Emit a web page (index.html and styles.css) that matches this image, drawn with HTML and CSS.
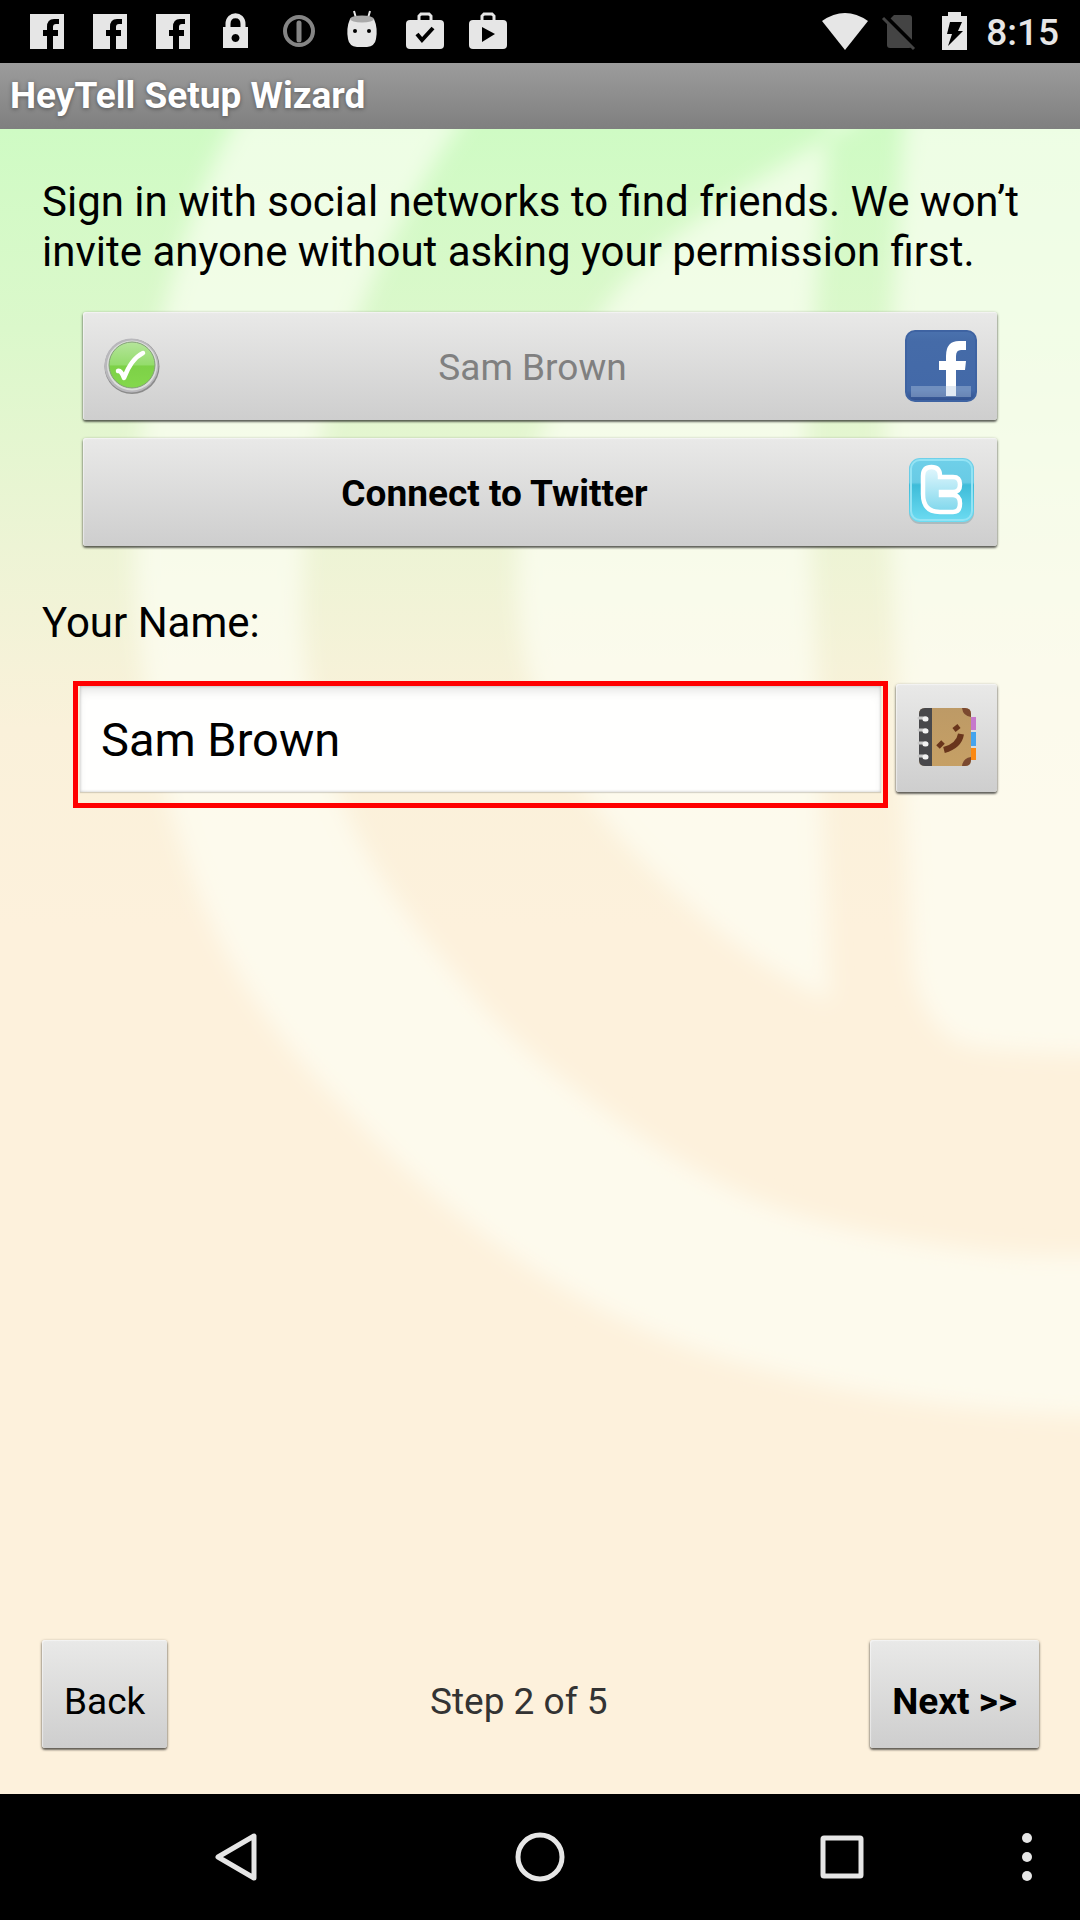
FILE: index.html
```html
<!DOCTYPE html>
<html lang="en">
<head>
<meta charset="utf-8">
<meta name="viewport" content="width=device-width, initial-scale=1">
<title>HeyTell Setup Wizard</title>
<link rel="stylesheet" href="styles.css">
</head>
<body>
<div class="screen">
  <div class="status-bar">
    <div class="status-group notifications">
      <svg class="status-icon" viewBox="0 0 48 48" aria-hidden="true"><path fill="#e6e6e6" d="M7 6h34v35H30V28h5v-6h-5v-3q0-3 3-3h3v-5h-5q-7 0-7 8v3h-4v6h4v13H7z"/></svg>
      <svg class="status-icon" viewBox="0 0 48 48" aria-hidden="true"><path fill="#e6e6e6" d="M7 6h34v35H30V28h5v-6h-5v-3q0-3 3-3h3v-5h-5q-7 0-7 8v3h-4v6h4v13H7z"/></svg>
      <svg class="status-icon" viewBox="0 0 48 48" aria-hidden="true"><path fill="#e6e6e6" d="M7 6h34v35H30V28h5v-6h-5v-3q0-3 3-3h3v-5h-5q-7 0-7 8v3h-4v6h4v13H7z"/></svg>
      <svg class="status-icon" viewBox="0 0 48 48" aria-hidden="true"><path d="M16 21v-5c0-11 15-11 15 0v5" fill="none" stroke="#e6e6e6" stroke-width="5"/><path fill="#e6e6e6" fill-rule="evenodd" d="M11 19h25v21H11zM23.500 26a4 4 0 1 0 .01 0z"/></svg>
      <svg class="status-icon" viewBox="0 0 48 48" aria-hidden="true"><circle cx="24" cy="23" r="14" fill="none" stroke="#858585" stroke-width="4"/><path d="M24 15v17" stroke="#858585" stroke-width="5" stroke-linecap="round"/></svg>
      <svg class="status-icon" viewBox="0 0 48 48" aria-hidden="true"><path d="M16 3l2 7M32 3l-2 7" stroke="#e6e6e6" stroke-width="2"/><path fill="#e6e6e6" d="M12 11h24q4 9 2 20-1 7-9 8H19q-8-1-9-8-2-11 2-20z"/><ellipse cx="24" cy="11" rx="12" ry="3.500" fill="#aaa"/><circle cx="17" cy="23" r="2" fill="#000"/><circle cx="31" cy="23" r="2" fill="#000"/></svg>
      <svg class="status-icon" viewBox="0 0 48 48" aria-hidden="true"><path d="M18 13V8l2-2h8l2 2v5" fill="none" stroke="#e6e6e6" stroke-width="3"/><rect x="5" y="12" width="38" height="29" rx="4" fill="#e6e6e6"/><path d="M16 26l5 6 11-12" fill="none" stroke="#000" stroke-width="4"/></svg>
      <svg class="status-icon" viewBox="0 0 48 48" aria-hidden="true"><path d="M18 13V8l2-2h8l2 2v5" fill="none" stroke="#e6e6e6" stroke-width="3"/><rect x="5" y="12" width="38" height="29" rx="4" fill="#e6e6e6"/><path d="M18 19v15l13-8z" fill="#000"/></svg>
    </div>
    <div class="status-group system">
      <svg class="status-icon" viewBox="0 0 48 48" aria-hidden="true"><path fill="#e6e6e6" d="M1 13Q24-3 47 13L24 42z"/></svg>
      <svg class="status-icon" viewBox="0 0 48 48" aria-hidden="true"><path fill="#444" d="M18 7h15q3 0 3 3v27q0 3-3 3H14q-3 0-3-3V14z"/><path d="M8 8l32 32" stroke="#000" stroke-width="6"/><path d="M7 10l31 31" stroke="#444" stroke-width="3"/></svg>
      <svg class="status-icon" viewBox="0 0 48 48" aria-hidden="true"><path fill="#e6e6e6" d="M17 4h13v4h6v34H11V8h6z"/><path fill="#000" d="M19 14h12l-4 9h5L17 38l4-12h-5z"/></svg>
      <span class="clock">8:15</span>
    </div>
  </div>

  <header class="title-bar"><h1 class="title">HeyTell Setup Wizard</h1></header>

  <main class="wizard">
    <svg class="backdrop" viewBox="0 0 1080 1665" preserveAspectRatio="none" aria-hidden="true">
      <defs>
        <filter id="soft" x="-10%" y="-10%" width="120%" height="120%"><feGaussianBlur stdDeviation="11"/></filter>
      </defs>
      <g fill="#fefff6" fill-opacity=".65" filter="url(#soft)">
        <path d="M241-20C165 120 130 290 135 459C145 610 175 710 207 784C240 860 290 925 345 979C400 1040 470 1100 537 1143C610 1190 680 1220 758 1239C870 1270 980 1285 1110 1288V1126C1040 1128 1000 1125 965 1120C890 1110 810 1095 744 1066C690 1040 640 1010 586 968C540 935 500 900 468 860C420 805 385 760 358 708C315 620 300 540 303 459C305 290 370 120 470-20z"/>
        <path d="M875-20C760 50 650 110 606 177C550 260 517 350 517 459C520 520 530 560 551 600C575 650 600 690 640 730C700 790 760 840 830 872L806 300L830-20z"/>
        <path d="M905-20L885 300L912 840Q925 905 970 918Q1030 926 1110 926V-20z"/>
      </g>
    </svg>

    <p class="intro">Sign in with social networks to find friends. We won’t invite anyone without asking your permission first.</p>

    <div class="networks">
      <button class="button network" type="button" disabled>
        <svg class="check" viewBox="0 0 56 58" aria-hidden="true">
          <defs><linearGradient id="green" x2="0" y2="1"><stop offset="0" stop-color="#b5e59b"/><stop offset=".5" stop-color="#94dc6c"/><stop offset=".52" stop-color="#7dd147"/><stop offset="1" stop-color="#84d84c"/></linearGradient></defs>
          <circle cx="28" cy="29.500" r="27.500" fill="#8b8b8b"/><circle cx="27.500" cy="28.500" r="27" fill="#b9b8bc"/><circle cx="28" cy="28.500" r="25" fill="#dcdedb"/><circle cx="28" cy="28" r="23" fill="url(#green)" stroke="#83a077" stroke-width="1"/>
          <path d="M14 34q3-1 6 7Q27 22 39 16" fill="none" stroke="#fff" stroke-width="4.500" stroke-linecap="round" stroke-linejoin="round"/>
        </svg>
        <span class="network-label">Sam Brown</span>
        <svg class="logo" viewBox="0 0 72 72" aria-hidden="true">
          <defs><linearGradient id="blue" x2="0" y2="1"><stop offset="0" stop-color="#4a72ae"/><stop offset=".15" stop-color="#456ba8"/><stop offset=".85" stop-color="#4369a8"/><stop offset="1" stop-color="#314f8d"/></linearGradient></defs>
          <rect x="1" y="1" width="70" height="70" rx="9" fill="url(#blue)" stroke="#3e63a2" stroke-width="2"/>
          <path fill="#fff" d="M41 66V40h-7v-9h7v-5q0-15 13-15h7v9h-5q-5 0-5 6v5h10l-1 9h-9v26z"/>
          <rect x="6" y="56" width="60" height="11" fill="#b5c7e1" fill-opacity=".4"/>
        </svg>
      </button>
      <button class="button network primary" type="button">
        <span class="network-label">Connect to Twitter</span>
        <svg class="logo" viewBox="0 0 72 72" aria-hidden="true">
          <defs><linearGradient id="cyan" x2="0" y2="1"><stop offset="0" stop-color="#6fd0e9"/><stop offset=".38" stop-color="#68cbe5"/><stop offset=".42" stop-color="#3ebcd9"/><stop offset="1" stop-color="#6ddcf2"/></linearGradient>
          <linearGradient id="bird" x2="0" y2="1"><stop offset="0" stop-color="#e2f7fd"/><stop offset="1" stop-color="#7fd7ec"/></linearGradient></defs>
          <rect x="4" y="3" width="65" height="65" rx="11" fill="#8faab0" fill-opacity=".6"/>
          <rect x="4" y="2" width="65" height="64" rx="11" fill="url(#cyan)"/>
          <rect x="6" y="4" width="61" height="60" rx="9" fill="none" stroke="#93e3f4" stroke-width="2"/>
          <path d="M18 20q0-9 8.500-9t8.500 9v1h13q7 0 7 7.500t-7 7.500H36v3h12q7 0 7 8.500t-7 8.500H35q-17 0-17-18z" fill="url(#bird)" stroke="#fff" stroke-width="4.500"/>
        </svg>
      </button>
    </div>

    <label class="name-label" for="name">Your Name:</label>
    <div class="name-row">
      <div class="highlight"><input class="name-input" id="name" type="text" value="Sam Brown"></div>
      <button class="button contacts" type="button" aria-label="Choose from contacts">
        <svg class="book" viewBox="0 0 60 60" aria-hidden="true">
          <defs><linearGradient id="cover" x2="0" y2="1"><stop offset="0" stop-color="#bd9a66"/><stop offset="1" stop-color="#c6a065"/></linearGradient></defs>
          <rect x="50" y="9" width="9" height="13" fill="#c679cc"/><rect x="50" y="24" width="9" height="14" fill="#45a4ee"/><rect x="50" y="40" width="9" height="12" fill="#fb8913"/>
          <path d="M8 0h40q6 0 6 6v46q0 6-6 6H8q-6 0-6-6V6q0-6 6-6z" fill="url(#cover)"/>
          <path d="M8 0h7v58H8q-6 0-6-6V6q0-6 6-6z" fill="#48484b"/>
          <path d="M45 0h3q6 0 6 6v3q-8-1-9-9zM45 58h3q6 0 6-6v-3q-8 1-9 9z" fill="#7b4930"/>
          <path d="M2 10h7M2 22h7M2 35h7M2 48h7" stroke="#c9c9c9" stroke-width="3" stroke-linecap="round"/><path d="M8 11h1M8 23h1M8 36h1M8 49h1" stroke="#f2f2f2" stroke-width="5" stroke-linecap="round"/>
          <path d="M44 26Q42 38 27 42" fill="none" stroke="#69351c" stroke-width="6"/><path d="M37 22l5-4M21 39l5-5" stroke="#69351c" stroke-width="5"/>
        </svg>
      </button>
    </div>

    <div class="steps">
      <button class="button step-button" type="button">Back</button>
      <span class="step-count">Step 2 of 5</span>
      <button class="button step-button primary" type="button">Next &gt;&gt;</button>
    </div>
  </main>

  <nav class="nav-bar" aria-label="System">
    <button class="nav-button back" type="button" aria-label="Back"><svg class="nav-icon" viewBox="0 0 54 54" aria-hidden="true"><path d="M7 27L43 6v42z" fill="none" stroke="#e6e6e6" stroke-width="5" stroke-linejoin="round"/></svg></button>
    <button class="nav-button" type="button" aria-label="Home"><svg class="nav-icon" viewBox="0 0 54 54" aria-hidden="true"><circle cx="27" cy="27" r="22" fill="none" stroke="#e6e6e6" stroke-width="5"/></svg></button>
    <button class="nav-button" type="button" aria-label="Recent apps"><svg class="nav-icon" viewBox="0 0 54 54" aria-hidden="true"><rect x="8" y="8" width="38" height="38" rx="1" fill="none" stroke="#e6e6e6" stroke-width="5" stroke-linejoin="round"/></svg></button>
    <button class="nav-button more" type="button" aria-label="More options"><svg class="nav-icon" viewBox="0 0 54 54" aria-hidden="true"><g fill="#e6e6e6"><circle cx="27" cy="8" r="5"/><circle cx="27" cy="27" r="5"/><circle cx="27" cy="46" r="5"/></g></svg></button>
  </nav>
</div>
</body>
</html>
```
FILE: styles.css
```css
*,
*::before,
*::after {
  box-sizing: border-box;
}

body {
  margin: 0;
  font-family: Roboto, "Noto Sans", sans-serif;
  color: #000;
  background: #000;
}

button,
input {
  font: inherit;
  color: inherit;
}

.screen {
  display: flex;
  flex-direction: column;
  min-height: 100vh;
}

/* System status bar */
.status-bar {
  display: flex;
  align-items: center;
  justify-content: space-between;
  height: 63px;
  padding: 0 21px 0 23px;
  background: #000;
}

.status-group {
  display: flex;
  align-items: center;
}

.notifications {
  gap: 15px;
}

.system {
  gap: 7px;
}

.status-icon {
  display: block;
  width: 48px;
  height: 48px;
}

.clock {
  padding-top: 2px;
  font-size: 37px;
  font-weight: 500;
  line-height: 48px;
  color: #e6e6e6;
}

/* Window title */
.title-bar {
  display: flex;
  align-items: center;
  height: 66px;
  padding: 0 10px;
  background: linear-gradient(#9c9c9c, #7f7f7f);
}

.title {
  margin: 0;
  font-size: 37px;
  font-weight: 700;
  line-height: 48px;
  color: #fff;
  text-shadow: 0 1px 4px rgba(0, 0, 0, 0.4);
}

/* Wizard page */
.wizard {
  position: relative;
  display: flex;
  flex: 1;
  flex-direction: column;
  padding: 48px 41px 46px 42px;
  isolation: isolate;
  overflow: hidden;
  background: linear-gradient(#cffbc4 0%, #dbf8cb 12%, #edf4d5 25%, #faf1da 36%, #fdf1dc 48%);
}

.backdrop {
  position: absolute;
  inset: 0;
  z-index: -1;
  width: 100%;
  height: 100%;
}

.intro {
  margin: 0;
  font-size: 42px;
  line-height: 50px;
}

.button {
  display: flex;
  align-items: center;
  justify-content: center;
  height: 108px;
  padding: 0;
  font-size: 37px;
  color: #000;
  background: linear-gradient(#e9e9e8, #cecece);
  border: 0;
  border-radius: 3px;
  box-shadow: inset 1px 1px 1px rgba(255, 255, 255, 0.5), 0 1px 3px rgba(0, 0, 0, 0.5), 0 2px 2px rgba(0, 0, 0, 0.4);
}

.button.primary {
  font-weight: 700;
}

.networks {
  display: flex;
  flex-direction: column;
  gap: 18px;
  padding: 35px 42px 0 41px;
}

.network {
  gap: 20px;
  padding: 0 20px 0 21px;
}

.network:disabled {
  color: #808080;
}

.network-label {
  flex: 1;
  padding-top: 2px;
}

.check {
  width: 56px;
  height: 58px;
}

.logo {
  width: 72px;
  height: 72px;
}

.name-label {
  margin-top: 52px;
  font-size: 42px;
  line-height: 50px;
}

.name-row {
  display: flex;
  gap: 8px;
  padding: 33px 42px 0 31px;
}

.highlight {
  flex: 1;
  padding: 0 2px 11px;
  border: 5px solid #f00;
}

.name-input {
  display: block;
  width: 100%;
  height: 106px;
  padding: 0 21px;
  font-size: 47px;
  background: #fffffe;
  border: 0;
  border-radius: 0;
  outline: 0;
  box-shadow: inset 0 8px 12px -4px rgba(0, 0, 0, 0.12), inset 0 0 3px rgba(0, 0, 0, 0.25), 0 1px 1px rgba(0, 0, 0, 0.15);
}

.contacts {
  width: 101px;
  margin-top: 3px;
}

.book {
  width: 60px;
  height: 60px;
}

.steps {
  display: flex;
  align-items: center;
  justify-content: space-between;
  margin-top: auto;
}

.step-button {
  padding: 14px 22px 0;
}

.step-count {
  padding-top: 14px;
  font-size: 37px;
  color: #333;
}

/* System navigation bar */
.nav-bar {
  display: grid;
  grid-template-columns: 1fr repeat(3, 28%) 1fr;
  align-items: center;
  height: 126px;
  background: #000;
}

.nav-button {
  display: flex;
  justify-content: center;
  padding: 0;
  background: none;
  border: 0;
}

.nav-button.back {
  grid-column-start: 2;
}

.nav-button.more {
  padding-right: 20px;
}

.nav-icon {
  flex: none;
  width: 54px;
  height: 54px;
}
```
